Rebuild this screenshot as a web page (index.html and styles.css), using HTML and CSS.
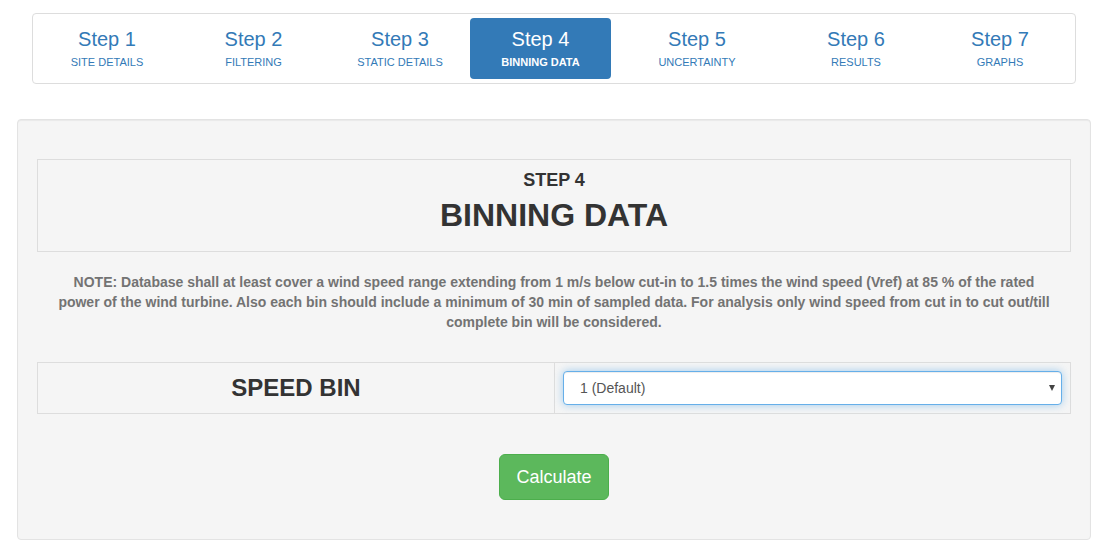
FILE: index.html
```html
<!DOCTYPE html>
<html lang="en">
<head>
<meta charset="utf-8">
<meta name="viewport" content="width=device-width, initial-scale=1">
<title>Step 4 - Binning Data</title>
<link rel="stylesheet" href="styles.css">
</head>
<body>
<nav class="steps" aria-label="Steps">
  <a class="step" href="#step-1"><span class="step-title">Step 1</span><span class="step-name">SITE DETAILS</span></a>
  <a class="step" href="#step-2"><span class="step-title">Step 2</span><span class="step-name">FILTERING</span></a>
  <a class="step" href="#step-3"><span class="step-title">Step 3</span><span class="step-name">STATIC DETAILS</span></a>
  <a class="step active" href="#step-4" aria-current="step"><span class="step-title">Step 4</span><span class="step-name">BINNING DATA</span></a>
  <a class="step" href="#step-5"><span class="step-title">Step 5</span><span class="step-name">UNCERTAINTY</span></a>
  <a class="step" href="#step-6"><span class="step-title">Step 6</span><span class="step-name">RESULTS</span></a>
  <a class="step" href="#step-7"><span class="step-title">Step 7</span><span class="step-name">GRAPHS</span></a>
</nav>
<main class="well">
  <header class="heading">
    <p class="heading-step">STEP 4</p>
    <h1 class="heading-title">BINNING DATA</h1>
  </header>
  <p class="note">NOTE: Database shall at least cover a wind speed range extending from 1 m/s below cut-in to 1.5 times the wind speed (Vref) at 85 % of the rated<br> power of the wind turbine. Also each bin should include a minimum of 30 min of sampled data. For analysis only wind speed from cut in to cut out/till<br> complete bin will be considered.</p>
  <form class="form">
    <div class="field-row">
      <label class="field-label" for="speed-bin">SPEED BIN</label>
      <div class="field-cell">
        <div class="select-wrap">
          <select class="select" id="speed-bin"><option>1 (Default)</option></select>
          <svg class="caret" viewBox="0 0 6 6" aria-hidden="true"><path d="M0 0h6L3 6z"/></svg>
        </div>
      </div>
    </div>
    <button class="button" type="button">Calculate</button>
  </form>
</main>
</body>
</html>
```
FILE: styles.css
```css
* {
  box-sizing: border-box;
}

body {
  margin: 0;
  padding: 13px 17px 16px;
  background: #fff;
  color: #333;
  font: 14px/20px "Liberation Sans", Arial, sans-serif;
}

.steps {
  display: grid;
  grid-template-columns: 140fr 153fr 140fr 141fr 172fr 146fr 142fr;
  margin: 0 15px 35px;
  padding: 4px;
  border: 1px solid #ddd;
  border-radius: 4px;
}

.step {
  display: flex;
  flex-direction: column;
  align-items: center;
  padding: 10px 0 9px;
  border-radius: 4px;
  color: #337ab7;
  text-decoration: none;
}

.step-title {
  font-size: 20px;
  line-height: 22px;
}

.step-name {
  padding-top: 5px;
  font-size: 11px;
  line-height: 15px;
}

.active {
  background: #337ab7;
  color: #fff;
}

.active .step-name {
  font-weight: bold;
}

.well {
  padding: 39px 19px;
  border: 1px solid #e3e3e3;
  border-radius: 4px;
  background: #f5f5f5;
  box-shadow: inset 0 1px 1px rgba(0, 0, 0, 0.05);
}

.heading {
  padding: 10px 8px 17px;
  border: 1px solid #ddd;
  text-align: center;
}

.heading-step {
  margin: 0;
  font-size: 18px;
  font-weight: bold;
  line-height: 20px;
}

.heading-title {
  margin: 6px 0 0;
  font-size: 32px;
  line-height: 38px;
}

.note {
  margin: 20px 0 30px;
  color: #737373;
  font-weight: bold;
  text-align: center;
}

.form {
  display: flex;
  flex-direction: column;
  align-items: center;
  gap: 40px;
}

.field-row {
  display: grid;
  grid-template-columns: 1fr 1fr;
  width: 100%;
  border: 1px solid #ddd;
}

.field-label {
  align-self: center;
  font-size: 24px;
  font-weight: bold;
  line-height: 28px;
  text-align: center;
}

.field-cell {
  padding: 8px;
  border-left: 1px solid #ddd;
}

.select-wrap {
  position: relative;
}

.select {
  display: block;
  appearance: none;
  width: 100%;
  height: 34px;
  padding: 6px 16px;
  border: 1px solid #66afe9;
  border-radius: 4px;
  outline: 0;
  background: #fff;
  box-shadow: inset 0 1px 1px rgba(0, 0, 0, 0.075), 0 0 8px rgba(102, 175, 233, 0.6);
  color: #555;
  font: inherit;
}

.caret {
  position: absolute;
  top: 14px;
  right: 7px;
  width: 6px;
  height: 6px;
  fill: #444;
  pointer-events: none;
}

.button {
  padding: 10px 16px;
  border: 1px solid #4cae4c;
  border-radius: 6px;
  background: #5cb85c;
  color: #fff;
  font: 18px/24px "Liberation Sans", Arial, sans-serif;
}
```
